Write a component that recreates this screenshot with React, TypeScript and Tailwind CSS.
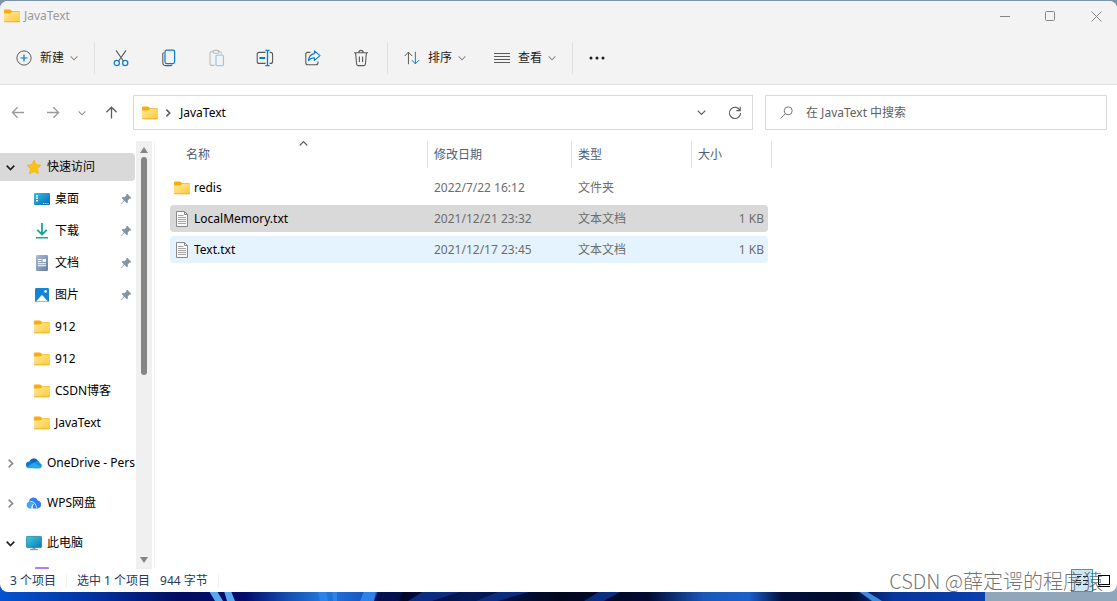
import React from 'react';

type IconProps = { className?: string };

const Chevron: React.FC<{ dir?: 'down' | 'up' | 'right'; size?: number; bold?: boolean; className?: string }> = ({
    dir = 'down',
    size = 8,
    bold = false,
    className = '',
}) => {
    const paths = {
        down: 'M0.8 3l4.2 4.2L9.2 3',
        up: 'M0.8 7.2L5 3l4.2 4.2',
        right: 'M3 0.8L7.2 5L3 9.2',
    };
    return (
        <svg
            width={size}
            height={size}
            viewBox="0 0 10 10"
            fill="none"
            stroke="currentColor"
            strokeWidth={bold ? 1.9 : 1.3}
            className={`shrink-0 overflow-visible ${className}`}
        >
            <path d={paths[dir]} />
        </svg>
    );
};

const FolderIcon: React.FC<IconProps> = ({ className = '' }) => (
    <svg width="16" height="14" viewBox="0 0 16 14" className={`shrink-0 ${className}`}>
        <defs>
            <linearGradient id="folder" x1="0" y1="0" x2="1" y2="1">
                <stop offset="0" stopColor="#ffe9a2" />
                <stop offset="1" stopColor="#ffc937" />
            </linearGradient>
        </defs>
        <path d="M0 1.6Q0 .5 1.1 .5H5.6Q6.3 .5 6.8 1L8 2.2H15Q16 2.2 16 3.2V8H0z" fill="#f5ae0c" />
        <path d="M0 4.4H6.2L8.2 2.9H15Q16 2.9 16 3.9V12Q16 13 15 13H1Q0 13 0 12z" fill="url(#folder)" />
        <path d="M0 12Q0 13.3 1 13.3H15Q16 13.3 16 12.3V12.1Q15.8 12.6 15 12.6H1Q.2 12.6 0 12z" fill="#e8a316" />
    </svg>
);

const TextFileIcon = () => (
    <svg width="12" height="16" viewBox="0 0 12 16" fill="none" className="shrink-0">
        <path d="M.5 .5H8.5L11.5 3.5V15.5H.5z" fill="#fbfbfb" stroke="#8b8b8b" />
        <path d="M8.5 .5V3.5H11.5" stroke="#8b8b8b" />
        <path d="M2 4.5H7.5M2 6.5H10M2 8.5H10M2 10.5H10M2 12.5H10" stroke="#a5a5a5" />
    </svg>
);

const StarIcon = () => (
    <svg width="16" height="16" viewBox="0 0 16 16">
        <path
            d="M8 1.2L10.1 5.7L15 6.3L11.4 9.7L12.4 14.8L8 12.3L3.6 14.8L4.6 9.7L1 6.3L5.9 5.7z"
            fill="#ffc20e"
            stroke="#f8ae10"
            strokeWidth=".8"
            strokeLinejoin="round"
        />
    </svg>
);

const DesktopIcon = () => (
    <svg width="16" height="16" viewBox="0 0 16 16">
        <defs>
            <linearGradient id="desk" x1="0" y1="0" x2="1" y2="1">
                <stop offset="0" stopColor="#2fc4dc" />
                <stop offset="1" stopColor="#0a63bd" />
            </linearGradient>
        </defs>
        <rect y="2" width="16" height="12" rx="1" fill="url(#desk)" />
        <path d="M2 4h2v1.5H2zM2 6.5h2V8H2zM2 9h2v1.5H2z" fill="#fff" />
        <path d="M9 12.5h1.2M11.2 12.5h1.2M13.4 12.5h1.2" stroke="#d5ecff" />
    </svg>
);

const DownloadIcon = () => (
    <svg width="16" height="16" viewBox="0 0 16 16" fill="none" stroke="#16a78e" strokeWidth="1.8">
        <path d="M8 0V11M3.2 6.8L8 11.4L12.8 6.8" />
        <path d="M2 14.8H14" strokeWidth="1.6" />
    </svg>
);

const DocumentIcon = () => (
    <svg width="16" height="16" viewBox="0 0 16 16">
        <defs>
            <linearGradient id="doc" x1="0" y1="0" x2="1" y2="1">
                <stop offset="0" stopColor="#abbdd3" />
                <stop offset="1" stopColor="#667f9e" />
            </linearGradient>
        </defs>
        <rect x="2" width="12" height="16" rx="1.2" fill="url(#doc)" />
        <path d="M4 4.5H7.5M4 6.5H7.5M4 8.7H12M4 10.8H12" stroke="#fff" strokeWidth="1.1" />
        <path d="M8.6 4h3.4v3H8.6z" fill="#fff" />
    </svg>
);

const PictureIcon = () => (
    <svg width="16" height="16" viewBox="0 0 16 16">
        <rect x="1" y="1" width="14" height="14" rx="1.2" fill="#1584d6" />
        <path d="M2 14.4L7.4 8.6Q8 8 8.6 8.6L14 14.4z" fill="#fff" />
        <circle cx="11.6" cy="4.4" r="1.3" fill="#fff" />
    </svg>
);

const OneDriveIcon = () => (
    <svg width="16" height="16" viewBox="0 0 16 16">
        <path d="M3.4 6.8A4.6 4.6 0 0 1 12 6L9 10z" fill="#0f63b8" />
        <path d="M3.6 6.4Q6 5.4 8 7.2L3 13.2A3.4 3.4 0 0 1 3.6 6.4z" fill="#1476cd" />
        <path d="M8.4 7.4Q12.2 3.8 13.8 8A2.7 2.7 0 0 1 13.2 13.3H8z" fill="#1490df" />
        <path d="M1.2 12.3Q5 9.2 8.4 7.6L15.3 12A2.6 2.6 0 0 1 13.2 13.3H3.4Q2 13.3 1.2 12.3z" fill="#28a8ea" />
    </svg>
);

const WpsIcon = () => (
    <svg width="16" height="16" viewBox="0 0 16 16">
        <path d="M3 6.4A4.6 4.6 0 0 1 11.8 5.4A4.1 4.1 0 0 1 12 13.4H10L6.4 8z" fill="#2f7ff0" />
        <path d="M3.4 6.4A3.6 3.6 0 0 0 3.4 13.4H5.6Q5 10.4 8 8.8Q5.8 6 3.4 6.4z" fill="#4ba3f8" />
        <path d="M8.2 9Q6 10.4 6.6 13.4H10.4Q10 10.8 8.2 9z" fill="#2f7ff0" />
        <path d="M4.6 6.2Q9.8 6.8 10.8 13.4M6 13.4Q5.6 10.4 8.2 8.6" fill="none" stroke="#fff" strokeWidth=".8" />
    </svg>
);

const ComputerIcon = () => (
    <svg width="16" height="16" viewBox="0 0 16 16">
        <defs>
            <linearGradient id="pc" x1="0" y1="0" x2="1" y2="1">
                <stop offset="0" stopColor="#37d2d4" />
                <stop offset="1" stopColor="#1173c4" />
            </linearGradient>
        </defs>
        <path d="M6.5 12h3v2.3h-3z" fill="#8ea0ad" />
        <path d="M4 14.6h8" stroke="#8c9ba6" strokeWidth="1.2" />
        <rect x=".4" y="1.4" width="15.2" height="11.2" rx=".8" fill="url(#pc)" stroke="#277d9d" strokeWidth=".8" />
    </svg>
);

const VideoIcon = () => (
    <svg width="16" height="16" viewBox="0 0 16 16">
        <rect x="1" width="14" height="15" rx="1" fill="#b57bf5" />
        <path d="M6 5l5 3-5 3z" fill="#fff" />
    </svg>
);

const PinIcon = () => (
    <svg width="12" height="12" viewBox="0 0 12 12" className="mr-[3px] ml-auto shrink-0">
        <path d="M7.2 .8L11.4 5L10.3 5.8L9.6 5.6L7.8 7.6L7.9 9.4L6.9 10.3L4.5 7.9L1 11.2L.6 10.9L3.9 7.3L1.6 5L2.5 4.1L4.4 4.2L6.4 2.4L6.2 1.7z" fill="#8694a0" />
    </svg>
);

const toolIcon = {
    width: 18,
    height: 18,
    viewBox: '0 0 18 18',
    fill: 'none',
    stroke: '#5a5a5a',
    strokeWidth: 1.1,
};

const PlusIcon = () => (
    <svg {...toolIcon} width={16} height={16}>
        <circle cx="9" cy="9" r="8" />
        <path d="M9 5V13M5 9H13" stroke="#0a78d4" strokeWidth="1.4" />
    </svg>
);

const CutIcon = () => (
    <svg {...toolIcon}>
        <path d="M4 1.4L11.6 12.2M14 1.4L6.4 12.2" />
        <circle cx="4.8" cy="14" r="2.6" stroke="#1680d8" strokeWidth="1.3" />
        <circle cx="13.2" cy="14" r="2.6" stroke="#1680d8" strokeWidth="1.3" />
    </svg>
);

const CopyIcon = () => (
    <svg {...toolIcon}>
        <path d="M3.6 3.4Q2.8 3.8 2.8 5V13.4Q2.8 16.6 6 16.6H10.6Q11.8 16.6 12.2 15.8" />
        <rect x="5" y="1.2" width="9.6" height="13.4" rx="1.8" stroke="#0a78d4" strokeWidth="1.2" />
    </svg>
);

const PasteIcon = () => (
    <svg {...toolIcon} stroke="#b9b9b9">
        <path d="M6 2.8H3.2Q2 2.8 2 4V15.2Q2 16.4 3.2 16.4H6.4M10 2.8H12.2Q13.4 2.8 13.4 4V4.6" />
        <rect x="5" y="1.4" width="6" height="2.8" rx="1.4" />
        <rect x="8" y="6.2" width="7.4" height="10.4" rx="1.2" stroke="#9ccaf0" strokeWidth="1.3" />
    </svg>
);

const RenameIcon = () => (
    <svg {...toolIcon}>
        <path d="M9.6 3.4H3.2Q1.2 3.4 1.2 5.4V12.4Q1.2 14.4 3.2 14.4H9.6M13.6 3.4H14.6Q16.6 3.4 16.6 5.4V12.4Q16.6 14.4 14.6 14.4H13.6" />
        <path d="M3.4 9H9.2" stroke="#0a78d4" strokeWidth="2" />
        <path d="M11.5 1.4V16.6M9.4 1.3H13.6M9.4 16.7H13.6" stroke="#0a78d4" strokeWidth="1.3" />
    </svg>
);

const ShareIcon = () => (
    <svg {...toolIcon}>
        <path d="M6.4 3.4H3.8Q1.8 3.4 1.8 5.4V13.8Q1.8 15.8 3.8 15.8H12Q14 15.8 14 13.8V12.6" />
        <path
            d="M10.4 1.8L16 6.6L10.4 11.4V8.8Q6.8 8.6 4.6 11.6Q5 5.4 10.4 4.6z"
            stroke="#0a78d4"
            strokeLinejoin="round"
        />
    </svg>
);

const TrashIcon = () => (
    <svg {...toolIcon}>
        <path d="M2 3.8H16M6.8 3.6Q6.8 1.4 9 1.4T11.2 3.6M3.6 4L4.6 15Q4.8 16.6 6.2 16.6H11.8Q13.2 16.6 13.4 15L14.4 4M7.4 7.4V13M10.6 7.4V13" />
    </svg>
);

const SortIcon = () => (
    <svg {...toolIcon} width={16} height={16}>
        <path d="M5 16V2.4M.8 6.8L5 2.4L9.2 6.8" />
        <path d="M12.8 2V15.6M8.8 11.4L12.8 15.6L17 11.4" stroke="#0a78d4" />
    </svg>
);

const ListIcon = () => (
    <svg width="16" height="16" viewBox="0 0 16 16" stroke="#5a5a5a">
        <path d="M0 3.5H16M0 6.5H16M0 9.5H16M0 12.5H16" />
    </svg>
);

const Arrow: React.FC<{ d: string; className?: string }> = ({ d, className = '' }) => (
    <svg width="14" height="14" viewBox="0 0 14 14" fill="none" stroke="currentColor" strokeWidth="1.3" className={className}>
        <path d={d} />
    </svg>
);

const commands = [
    { label: '剪切', icon: CutIcon },
    { label: '复制', icon: CopyIcon },
    { label: '粘贴', icon: PasteIcon },
    { label: '重命名', icon: RenameIcon },
    { label: '共享', icon: ShareIcon },
    { label: '删除', icon: TrashIcon },
];

const quickItems = [
    { label: '桌面', icon: DesktopIcon, pinned: true },
    { label: '下载', icon: DownloadIcon, pinned: true },
    { label: '文档', icon: DocumentIcon, pinned: true },
    { label: '图片', icon: PictureIcon, pinned: true },
    { label: '912', icon: FolderIcon },
    { label: '912', icon: FolderIcon },
    { label: 'CSDN博客', icon: FolderIcon },
    { label: 'JavaText', icon: FolderIcon },
];

const files = [
    { name: 'redis', date: '2022/7/22 16:12', type: '文件夹', size: '', icon: FolderIcon, bg: '' },
    { name: 'LocalMemory.txt', date: '2021/12/21 23:32', type: '文本文档', size: '1 KB', icon: TextFileIcon, bg: 'bg-[#d9d9d9]' },
    { name: 'Text.txt', date: '2021/12/17 23:45', type: '文本文档', size: '1 KB', icon: TextFileIcon, bg: 'bg-[#e5f3ff]' },
];

const Divider = () => <div className="h-8 w-px bg-[#e1e1e1]" />;

const MenuButton: React.FC<{ label: string; icon: React.FC; className?: string }> = ({ label, icon: Icon, className = '' }) => (
    <button className={`flex h-8 items-center pl-4 ${className}`}>
        <Icon />
        <span className="ml-2">{label}</span>
        <Chevron className="ml-1.5 text-[#8a8a8a]" />
    </button>
);

const TitleBar = () => (
    <div className="flex h-[30px] items-center pl-1 text-[#999]">
        <FolderIcon />
        <span className="ml-1">JavaText</span>
        <div className="ml-auto flex h-full text-[#858585]">
            <button aria-label="最小化" className="flex w-10 items-center justify-center">
                <svg width="11" height="11" stroke="currentColor"><path d="M0 5.5H10" /></svg>
            </button>
            <button aria-label="最大化" className="flex w-[50px] items-center justify-center">
                <svg width="11" height="11" fill="none" stroke="currentColor"><rect x=".5" y=".5" width="9" height="9" rx="1" /></svg>
            </button>
            <button aria-label="关闭" className="flex w-[42px] items-center justify-center">
                <svg width="11" height="11" stroke="currentColor"><path d="M.5 .5L10.5 10.5M10.5 .5L.5 10.5" /></svg>
            </button>
        </div>
    </div>
);

const Toolbar = () => (
    <div className="flex h-[53px] items-center text-[#1b1b1b]">
        <MenuButton label="新建" icon={PlusIcon} className="mr-4" />
        <Divider />
        <div className="mx-0.5 flex">
            {commands.map(({ label, icon: Icon }) => (
                <button key={label} aria-label={label} className="flex h-8 w-12 items-center justify-center">
                    <Icon />
                </button>
            ))}
        </div>
        <Divider />
        <MenuButton label="排序" icon={SortIcon} className="mr-3" />
        <MenuButton label="查看" icon={ListIcon} className="mr-4" />
        <Divider />
        <button aria-label="更多" className="flex h-8 w-12 items-center justify-center">
            <svg width="16" height="4" fill="#1b1b1b">
                <circle cx="2" cy="2" r="1.5" />
                <circle cx="8" cy="2" r="1.5" />
                <circle cx="14" cy="2" r="1.5" />
            </svg>
        </button>
    </div>
);

const AddressBar = () => (
    <div className="flex h-[57px] shrink-0 border-t border-[#dedede] pt-2.5 pr-2.5">
        <div className="mr-1 flex h-[35px] text-[#5c5c5c]">
            <button aria-label="后退" className="flex w-[35px] items-center justify-center text-[#9a9a9a]">
                <Arrow d="M13 6.5H1.4M6.6 1.3L1.4 6.5L6.6 11.7" />
            </button>
            <button aria-label="前进" className="flex w-[35px] items-center justify-center text-[#9a9a9a]">
                <Arrow d="M1 6.5H12.6M7.4 1.3L12.6 6.5L7.4 11.7" />
            </button>
            <button aria-label="最近浏览的位置" className="flex w-6 items-center justify-center text-[#8a8a8a]">
                <Chevron />
            </button>
            <button aria-label="上移" className="flex w-[35px] items-center justify-center">
                <Arrow d="M6.5 12.5V1.2M1.4 6.3L6.5 1.2L11.6 6.3" />
            </button>
        </div>
        <div className="flex h-[35px] flex-1 items-center border border-[#d9d9d9] pl-2">
            <FolderIcon />
            <Chevron dir="right" bold className="ml-1.5 text-[#5c5c5c]" />
            <button className="ml-2">JavaText</button>
            <button aria-label="历史记录" className="ml-auto flex h-full w-[34px] items-center justify-center text-[#5c5c5c]">
                <Chevron size={9} />
            </button>
            <button aria-label="刷新" className="flex h-full w-[34px] items-center justify-center text-[#5c5c5c]">
                <svg width="14" height="14" viewBox="0 0 14 14" fill="none" stroke="currentColor" strokeWidth="1.1">
                    <path d="M12 4.4A5.6 5.6 0 1 0 12.6 7M12.2 .8V4.6H8.4" />
                </svg>
            </button>
        </div>
        <label className="ml-3 flex h-[35px] w-[342px] items-center border border-[#d9d9d9] pl-3.5">
            <svg width="14" height="14" viewBox="0 0 14 14" fill="none" stroke="#777" className="shrink-0">
                <circle cx="8.2" cy="4.8" r="4" />
                <path d="M5.4 7.8L.4 12.6" />
            </svg>
            <input
                type="text"
                aria-label="搜索"
                placeholder="在 JavaText 中搜索"
                className="ml-3 w-full min-w-0 outline-none placeholder:text-[#5f5f5f]"
            />
        </label>
    </div>
);

const TreeRoot: React.FC<{ label: string; icon: React.FC; open?: boolean; className?: string }> = ({
    label,
    icon: Icon,
    open = false,
    className = '',
}) => (
    <button className={`flex h-7 w-full shrink-0 items-center pl-1.5 whitespace-nowrap ${className}`}>
        {open ? <Chevron size={9} bold className="text-[#222]" /> : <Chevron dir="right" size={9} bold className="text-[#8a8a8a]" />}
        <span className="ml-[11px] shrink-0"><Icon /></span>
        <span className="ml-[5px]">{label}</span>
    </button>
);

const Sidebar = () => (
    <nav className="flex w-[152px] shrink-0">
        <div className="mr-px flex w-[135px] flex-col gap-1 overflow-hidden pt-3">
            <TreeRoot label="快速访问" icon={StarIcon} open className="rounded-r-sm bg-[#d9d9d9]" />
            {quickItems.map(({ label, icon: Icon, pinned }, i) => (
                <button key={i} className="flex h-7 shrink-0 items-center pl-[34px]">
                    <Icon />
                    <span className="ml-[5px]">{label}</span>
                    {pinned && <PinIcon />}
                </button>
            ))}
            <TreeRoot label="OneDrive - Personal" icon={OneDriveIcon} className="mt-2" />
            <TreeRoot label="WPS网盘" icon={WpsIcon} className="mt-2" />
            <TreeRoot label="此电脑" icon={ComputerIcon} open className="mt-2" />
            <button aria-label="视频" className="flex h-7 shrink-0 items-center pl-[34px]">
                <VideoIcon />
            </button>
        </div>
        <div className="flex w-4 flex-col items-center bg-[#f0f0f0] py-1.5">
            <svg width="8" height="6" fill="#858585"><path d="M4 0L8 6H0z" /></svg>
            <div className="my-1 w-full flex-1">
                <div className="mx-auto h-[55%] w-1.5 rounded-full bg-[#858585]" />
            </div>
            <svg width="8" height="6" fill="#858585"><path d="M0 0H8L4 6z" /></svg>
        </div>
    </nav>
);

const HeaderCell: React.FC<{ className: string; children: React.ReactNode }> = ({ className, children }) => (
    <th className="h-[31px] p-0 align-top font-normal">
        <div className={`relative flex h-[27px] items-center border-r border-[#e2e2e2] ${className}`}>{children}</div>
    </th>
);

const FileList = () => (
    <main className="ml-0.5 flex-1 border-l border-[#f3f3f3] pl-[15px]">
        <table className="w-[602px] table-fixed border-collapse text-left text-[#6d6d6d]">
            <colgroup>
                <col className="w-[258px]" />
                <col className="w-36" />
                <col className="w-30" />
                <col className="w-20" />
            </colgroup>
            <thead className="text-[#4c607a]">
                <tr>
                    <HeaderCell className="pl-4">
                        名称
                        <Chevron dir="up" size={9} className="absolute -top-0.5 left-1/2 text-[#5c5c5c]" />
                    </HeaderCell>
                    <HeaderCell className="pl-1.5">修改日期</HeaderCell>
                    <HeaderCell className="pl-1.5">类型</HeaderCell>
                    <HeaderCell className="pl-1.5">大小</HeaderCell>
                </tr>
            </thead>
            <tbody>
                {files.map(({ name, date, type, size, icon: Icon, bg }) => (
                    <tr key={name}>
                        <td className="px-0 py-0.5">
                            <div className={`flex h-[27px] items-center rounded-l-sm pl-1 text-black ${bg}`}>
                                <span className="flex w-4 justify-center"><Icon /></span>
                                <span className="ml-1">{name}</span>
                            </div>
                        </td>
                        <td className="px-0 py-0.5">
                            <div className={`flex h-[27px] items-center pl-1.5 ${bg}`}>{date}</div>
                        </td>
                        <td className="px-0 py-0.5">
                            <div className={`flex h-[27px] items-center pl-1.5 ${bg}`}>{type}</div>
                        </td>
                        <td className="px-0 py-0.5">
                            <div className={`mr-1 flex h-[27px] items-center justify-end rounded-r-sm pr-1 ${bg}`}>{size}</div>
                        </td>
                    </tr>
                ))}
            </tbody>
        </table>
    </main>
);

const StatusBar = () => (
    <footer className="relative flex h-[23px] shrink-0 items-center pl-2.5 text-[#1e395b]">
        <span>3 个项目</span>
        <span className="mx-2.5 h-3 w-px bg-[#eee]" />
        <span>选中 1 个项目</span>
        <span className="ml-2.5">944 字节</span>
        <span className="ml-2.5 h-3 w-px bg-[#eee]" />
        <div className="ml-auto flex items-center pr-[7px]">
            <button aria-label="详细信息" className="flex h-[23px] w-[22px] items-center justify-center border border-[#26a0da] bg-[#cce8f6]">
                <svg width="14" height="12" stroke="#222">
                    <path d="M2 1.5H6M8 1.5H13M1 5.5H6M8 5.5H13M1 9.5H6M8 9.5H13" />
                </svg>
            </button>
            <button aria-label="大缩略图" className="ml-[5px] flex h-[23px] items-center">
                <svg width="12" height="12" fill="#fff" stroke="#000">
                    <rect x=".5" y=".5" width="11" height="9" />
                    <path d="M0 11.5H12" />
                </svg>
            </button>
        </div>
        {/* Author mark laid over the right end of the bar */}
        <span className="pointer-events-none absolute right-3.5 bottom-0 text-xl leading-[22px] font-light text-[#444]/75 [font-family:'Noto_Sans_CJK_SC',sans-serif]">
            CSDN @薛定谔的程序猿
        </span>
    </footer>
);

const Wallpaper = () => (
    <svg viewBox="0 0 1117 16" preserveAspectRatio="none" className="absolute bottom-0 left-0 h-4 w-full">
        <defs>
            <linearGradient id="wall">
                <stop offset="0" stopColor="#0553cf" />
                <stop offset=".08" stopColor="#0333a4" />
                <stop offset=".16" stopColor="#020d60" />
                <stop offset=".22" stopColor="#020d6c" />
                <stop offset=".26" stopColor="#1453b4" />
                <stop offset=".29" stopColor="#2478dc" />
                <stop offset=".34" stopColor="#0d49b4" />
                <stop offset=".36" stopColor="#02062c" />
                <stop offset=".42" stopColor="#04195c" />
                <stop offset=".5" stopColor="#020720" />
                <stop offset=".58" stopColor="#020a30" />
                <stop offset=".63" stopColor="#1858b8" />
                <stop offset=".67" stopColor="#1a60ca" />
                <stop offset=".7" stopColor="#02103c" />
                <stop offset=".76" stopColor="#020a2c" />
                <stop offset=".8" stopColor="#07369c" />
                <stop offset=".88" stopColor="#0a3fae" />
            </linearGradient>
        </defs>
        <rect width="1117" height="16" fill="url(#wall)" />
        <path d="M209 6h8l6 10h-8zM224 6h7l4 10h-8z" fill="#58a7ef" />
        <path d="M318 6h8l2 10h-8zM332 6h5v10h-4zM364 6h12l-2 10h-14z" fill="#2b82e8" />
        <path d="M378 6h26l-8 10h-22z" fill="#03104e" />
        <path d="M424 6h38l-30 10h-24zM500 6h32l-34 10h-22zM600 6h22l-18 10h-20z" fill="#0a2d80" />
        <path d="M858 6h8l16 10h-10z" fill="#3d8be0" />
        <rect x="985" width="132" height="16" fill="#8fa6bb" />
    </svg>
);

export default function App() {
    return (
        <div className="relative flex h-screen min-h-[400px] flex-col bg-[#7b95ad] pt-px pb-[9px] text-xs text-black [font-family:'Noto_Sans','Noto_Sans_CJK_SC',sans-serif]">
            <Wallpaper />
            <div className="relative flex min-h-0 flex-1 flex-col overflow-hidden rounded-lg bg-white">
                <header className="shrink-0 bg-[#f3f3f3]">
                    <TitleBar />
                    <Toolbar />
                </header>
                <AddressBar />
                <div className="flex min-h-0 flex-1">
                    <Sidebar />
                    <FileList />
                </div>
                <StatusBar />
            </div>
        </div>
    );
}
